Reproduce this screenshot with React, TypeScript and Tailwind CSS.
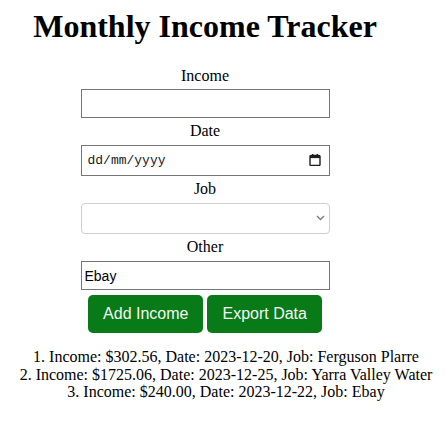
import { useState } from 'react'

type Entry = {
  income: string
  date: string
  job: string
}

const entries: Entry[] = [
  { income: '302.56', date: '2023-12-20', job: 'Ferguson Plarre' },
  { income: '1725.06', date: '2023-12-25', job: 'Yarra Valley Water' },
  { income: '240.00', date: '2023-12-22', job: 'Ebay' },
]

const serif = "font-['Liberation_Serif',serif]"
const sans = "font-['Liberation_Sans',Arial,sans-serif]"

const CalendarIcon = () => (
  <svg width="12" height="12" viewBox="0 0 12 12" fill="none">
    <rect x="1" y="1.5" width="10" height="10" rx="1" stroke="#1f1f1f" strokeWidth="1.4" />
    <rect x="1" y="1.5" width="10" height="2.6" fill="#1f1f1f" />
    <rect x="3" y="0" width="1.4" height="2" fill="#1f1f1f" />
    <rect x="7.6" y="0" width="1.4" height="2" fill="#1f1f1f" />
  </svg>
)

const ChevronDown = () => (
  <svg width="9" height="6" viewBox="0 0 9 6" fill="none">
    <path d="M1 1l3.5 3.5L8 1" stroke="#7a7a7a" strokeWidth="1.3" />
  </svg>
)

export default function App() {
  const [income, setIncome] = useState('')
  const [job, setJob] = useState('')
  const [other, setOther] = useState('Ebay')

  return (
    <div className={`w-[445px] min-h-[422px] bg-white pt-[8px] text-black ${serif}`}>
      <div className="flex w-[410px] flex-col items-center">
        <h1 className="text-[32px] font-bold leading-[37px]">Monthly Income Tracker</h1>

        <label className="mt-[22px] text-[16px] leading-[18px]">Income</label>
        <input
          className={`mt-[4px] h-[29px] w-[249px] border border-[#767676] px-[3px] text-[13.33px] outline-none ${sans}`}
          value={income}
          onChange={(e) => setIncome(e.target.value)}
        />

        <label className="mt-[4px] text-[16px] leading-[18px]">Date</label>
        <div className="relative mt-[5px] h-[31px] w-[249px]">
          <input
            readOnly
            placeholder="dd/mm/yyyy"
            className="h-full w-full border border-[#767676] pl-[6px] text-[13px] outline-none placeholder:text-[#1a1a1a] font-['Liberation_Mono',monospace]"
          />
          <div className="pointer-events-none absolute right-[9px] top-[9px]">
            <CalendarIcon />
          </div>
        </div>

        <label className="mt-[4px] text-[16px] leading-[18px]">Job</label>
        <div className="relative mt-[5px] h-[31px] w-[249px]">
          <select
            className={`h-full w-full appearance-none rounded-[4px] border border-[#cfcfcf] bg-white text-[13px] outline-none ${sans}`}
            value={job}
            onChange={(e) => setJob(e.target.value)}
          >
            <option value=""></option>
            <option value="Ferguson Plarre">Ferguson Plarre</option>
            <option value="Yarra Valley Water">Yarra Valley Water</option>
          </select>
          <div className="pointer-events-none absolute right-[5px] top-[12px]">
            <ChevronDown />
          </div>
        </div>

        <label className="mt-[4px] text-[16px] leading-[18px]">Other</label>
        <input
          className={`mt-[5px] h-[29px] w-[249px] border border-[#767676] px-[3px] text-[14px] outline-none ${sans}`}
          value={other}
          onChange={(e) => setOther(e.target.value)}
        />

        <div className={`mt-[5px] flex gap-[4px] ${sans}`}>
          <button className="h-[38px] rounded-[5px] bg-[#087a18] px-[15px] text-[16px] text-[#f4f8f4]">
            Add Income
          </button>
          <button className="h-[38px] rounded-[5px] bg-[#087a18] px-[15px] text-[16px] text-[#f4f8f4]">
            Export Data
          </button>
        </div>
      </div>

      <ol className="mt-[15px] pl-[7px] text-center text-[16px] leading-[17.5px]">
        {entries.map((e, i) => (
          <li key={i}>
            {i + 1}. Income: ${e.income}, Date: {e.date}, Job: {e.job}
          </li>
        ))}
      </ol>
    </div>
  )
}
